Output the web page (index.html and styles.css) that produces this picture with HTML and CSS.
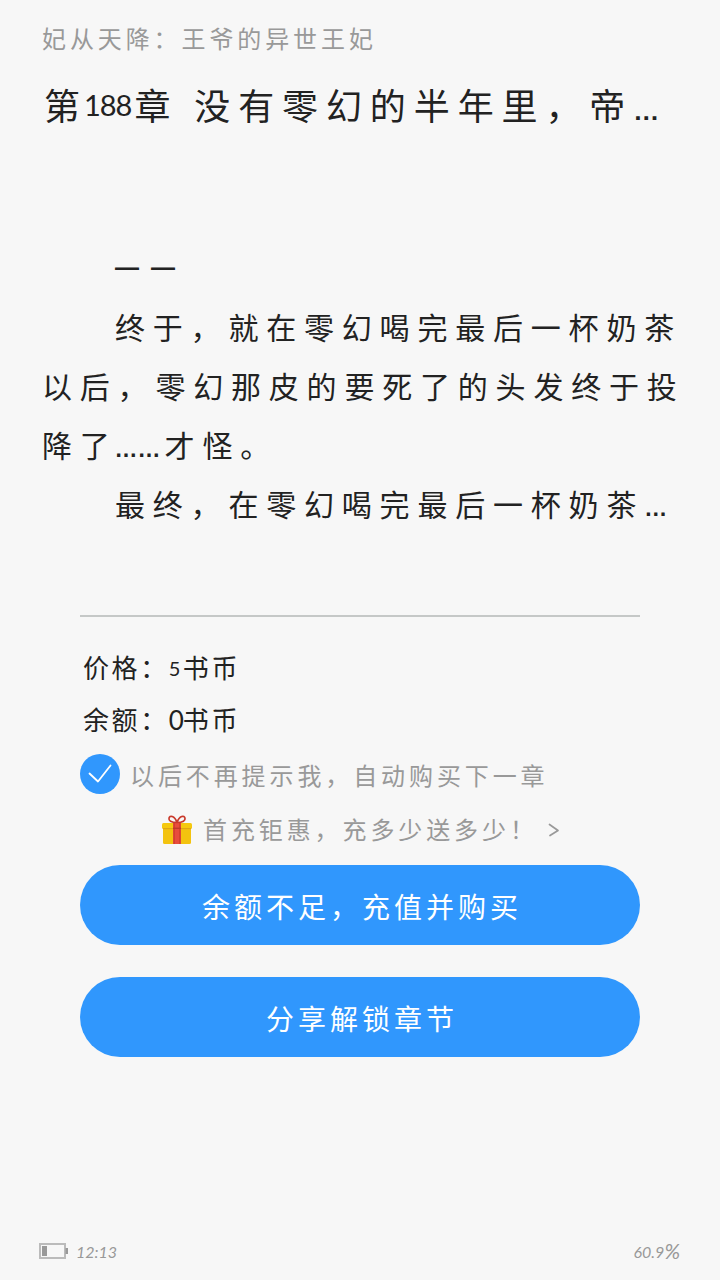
FILE: index.html
```html
<!DOCTYPE html>
<html lang="zh-CN">
<head>
  <meta charset="UTF-8" />
  <title>妃从天降：王爷的异世王妃</title>
  <link rel="stylesheet" href="styles.css">
</head>
<body>

<div class="page">
  <header class="book-name">妃从天降：王爷的异世王妃</header>
  <h1 class="chapter">第<span class="num">188</span>章 没有零幻的半年里，帝<span class="dots">…</span></h1>

  <div class="content">
    <p><span class="dash">——</span></p>
    <p>终于，就在零幻喝完最后一杯奶茶<br>以后，零幻那皮的要死了的头发终于投<br>降了<span class="dots mid">……</span>才怪。</p>
    <p>最终，在零幻喝完最后一杯奶茶<span class="dots">…</span></p>
  </div>

  <div class="pay">
    <div class="info">价格：<span class="amount small">5</span>书币</div>
    <div class="info">余额：<span class="amount">0</span>书币</div>

    <div class="auto-buy">
      <svg class="check" viewBox="0 0 40 40">
        <circle cx="20" cy="20" r="20" fill="#3097fd"/>
        <path d="M9.5 19.5 L18 27.5 L30.5 11.5" fill="none" stroke="#fff" stroke-width="1.8" stroke-linecap="round" stroke-linejoin="round"/>
      </svg>
      <span>以后不再提示我，自动购买下一章</span>
    </div>

    <div class="promo">
      <svg class="gift" viewBox="0 0 30 30">
        <rect x="1" y="10" width="28" height="19" rx="1.5" fill="#f3c30f"/>
        <rect x="0" y="8" width="30" height="6" rx="1.5" fill="#f5c90f"/>
        <rect x="1" y="13" width="28" height="1.2" fill="#dfa514"/>
        <rect x="11" y="8" width="8" height="21" fill="#e84c3d"/>
        <path d="M12.2 8v21M17.8 8v21" stroke="#cf3f2c" stroke-width="1.2"/>
        <rect x="11" y="12.6" width="8" height="1.4" fill="#bd3a2b"/>
        <path d="M15 7.5C9 7.5 6.5 5.5 7 3.2C7.6 .2 12.5 .2 15 7.5C17.5 .2 22.4 .2 23 3.2C23.5 5.5 21 7.5 15 7.5Z" fill="none" stroke="#c9392b" stroke-width="1.7" stroke-linejoin="round"/>
      </svg>
      <span>首充钜惠，充多少送多少！</span>
      <svg class="arrow" viewBox="0 0 12 14">
        <path d="M1.5 1.5L10 7.5L2 12.5" fill="none" stroke="#999" stroke-width="1.7" stroke-linecap="round" stroke-linejoin="round"/>
      </svg>
    </div>

    <button class="btn">余额不足，充值并购买</button>
    <button class="btn">分享解锁章节</button>
  </div>

  <footer class="status">
    <svg class="battery" viewBox="0 0 29 16">
      <rect x="1" y="1" width="25" height="14" fill="none" stroke="#bbb" stroke-width="2"/>
      <rect x="3" y="3" width="5" height="10" fill="#999"/>
      <rect x="26.5" y="5" width="2.5" height="6" fill="#999"/>
    </svg>
    <span class="time">12:13</span>
    <span class="progress">60.9<span class="percent">%</span></span>
  </footer>
</div>

</body>
</html>
```
FILE: styles.css
```css
* {
  box-sizing: border-box;
}
body {
  margin: 0;
  background: #f7f7f7;
  color: #222;
  font-family: "Noto Sans CJK SC", sans-serif;
  font-weight: 400;
}
.page {
  width: 720px;
  height: 1280px;
  display: flex;
  flex-direction: column;
  white-space: nowrap;
  overflow: hidden;
}
.book-name {
  padding: 18px 42px 0;
  font-size: 24px;
  line-height: 40px;
  letter-spacing: 3.9px;
  color: #999;
}
.chapter {
  margin: 16px 0 0;
  padding-left: 44px;
  font-size: 36px;
  line-height: 60px;
  font-weight: 400;
  letter-spacing: 7.9px;
}
.num {
  margin: 0 3px 0 -4px;
  font-family: Lato, sans-serif;
  font-size: 29px;
  line-height: 0;
  letter-spacing: -1px;
  vertical-align: 4px;
}
.dots {
  font-family: "Liberation Sans", sans-serif;
  font-size: 23px;
  font-weight: 700;
  line-height: 0;
  letter-spacing: 0;
}
.chapter .dots {
  font-size: 26px;
}
.mid {
  margin: 0 4px 0 -3px;
}
.content {
  padding: 104px 0 0 42px;
  font-size: 30px;
  line-height: 59px;
  letter-spacing: 7.8px;
}
.content p {
  margin: 0;
  text-indent: 73px;
}
.dash {
  font-family: "Liberation Sans", sans-serif;
  font-size: 24px;
  font-weight: 700;
  line-height: 0;
  letter-spacing: 12px;
  vertical-align: 5px;
}
.pay {
  width: 560px;
  margin: 82px auto 0;
  padding-top: 24px;
  border-top: 2px solid #c5c8c7;
}
.info {
  height: 52px;
  padding-left: 3px;
  font-size: 26px;
  line-height: 52px;
  letter-spacing: 2.6px;
}
.amount {
  display: inline-block;
  width: 14px;
  font-family: Lato, sans-serif;
  line-height: 1;
  letter-spacing: 0;
}
.small {
  font-size: 20px;
  vertical-align: 2px;
}
.auto-buy,
.promo {
  display: flex;
  align-items: center;
  height: 54px;
  font-size: 24px;
  letter-spacing: 3.9px;
  color: #999;
}
.auto-buy {
  margin-top: 4px;
}
.promo {
  padding-left: 82px;
}
.auto-buy span,
.promo span {
  padding-bottom: 3px;
}
.check {
  width: 40px;
  height: 40px;
  margin: 0 10px 4px 0;
}
.gift {
  width: 30px;
  height: 30px;
  margin-right: 11px;
}
.arrow {
  width: 12px;
  height: 14px;
  margin-left: 10px;
}
.btn {
  display: block;
  width: 560px;
  height: 80px;
  margin: 8px 0 0;
  padding: 2px 0 0 4px;
  border: none;
  border-radius: 40px;
  background: #3097fd;
  color: #fff;
  font-family: inherit;
  font-size: 28px;
  font-weight: 400;
  letter-spacing: 4px;
}
.btn + .btn {
  margin-top: 32px;
}
.status {
  display: flex;
  align-items: center;
  margin-top: auto;
  padding: 0 40px 12px 39px;
  height: 46px;
  font-family: Lato, sans-serif;
  font-size: 16px;
  font-style: italic;
  font-weight: 400;
  color: #999;
}
.battery {
  width: 29px;
  height: 16px;
}
.time {
  margin-left: 8px;
}
.progress {
  margin-left: auto;
}
.percent {
  font-size: 21px;
  line-height: 0;
  vertical-align: -1px;
}
```
